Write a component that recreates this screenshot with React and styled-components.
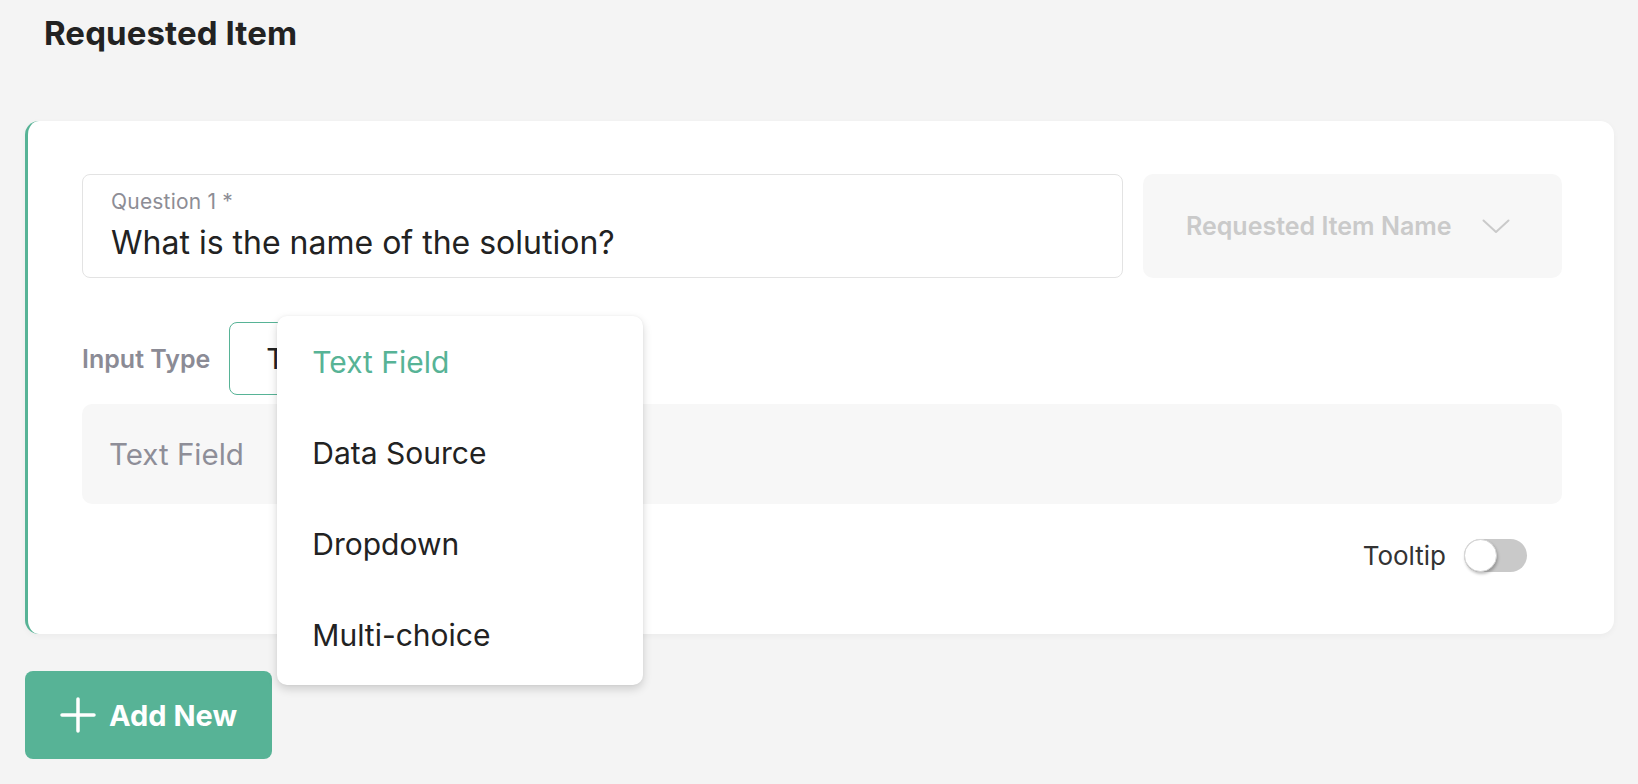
import React from "react";
import styled, { createGlobalStyle } from "styled-components";

const GlobalStyle = createGlobalStyle`
    body {
        margin: 0;
        background: #f4f4f4;
        font-family: Inter, "Noto Sans", sans-serif;
        color: #222;
    }
`;

const green = "#57b396";

const Page = styled.div`
    padding: 0 24px 0 25px;
    width: 1589px;
`;

const Title = styled.h1`
    margin: 0;
    padding: 13px 0 0 19px;
    height: 121px;
    box-sizing: border-box;
    font-size: 33px;
    font-weight: 700;
    color: #222;
    letter-spacing: 0.1px;
`;

const Card = styled.div`
    background: #fff;
    border-left: 3px solid ${green};
    border-radius: 14px;
    padding: 53px 52px 62px 54px;
    display: flex;
    flex-direction: column;
    box-shadow: 0 2px 6px rgba(0, 0, 0, 0.04);
`;

const TopRow = styled.div`
    display: flex;
    gap: 20px;
`;

const QuestionBox = styled.div`
    flex: 1;
    height: 104px;
    box-sizing: border-box;
    border: 1.5px solid #e3e3e3;
    border-radius: 8px;
    padding: 14px 28px 0;
    display: flex;
    flex-direction: column;
`;

const QuestionLabel = styled.span`
    font-size: 21px;
    color: #8d8d95;
    line-height: 26px;
    letter-spacing: 0.2px;
`;

const QuestionValue = styled.span`
    font-size: 32px;
    color: #222;
    line-height: 40px;
    margin-top: 8px;
`;

const NameSelect = styled.div`
    width: 419px;
    height: 104px;
    box-sizing: border-box;
    background: #f7f7f7;
    border-radius: 10px;
    display: flex;
    align-items: center;
    padding: 0 52px 0 43px;
    justify-content: space-between;
    font-size: 25px;
    font-weight: 600;
    color: #cacaca;
`;

const TypeRow = styled.div`
    display: flex;
    align-items: center;
    gap: 19px;
    margin-top: 44px;
`;

const TypeLabel = styled.span`
    font-size: 25px;
    font-weight: 600;
    color: #8b8b95;
`;

const SelectWrap = styled.div`
    position: relative;
`;

const SelectBox = styled.div`
    width: 250px;
    height: 73px;
    box-sizing: border-box;
    border: 1.5px solid ${green};
    border-radius: 8px;
    display: flex;
    align-items: center;
    padding-left: 36px;
    font-size: 29px;
    color: #222;
`;

const Menu = styled.ul`
    position: absolute;
    left: 48px;
    top: -6px;
    width: 366px;
    margin: 0;
    padding: 0 0 5px;
    list-style: none;
    background: #fff;
    border-radius: 10px;
    box-shadow: 0 4px 10px rgba(0, 0, 0, 0.16), 0 0 3px rgba(0, 0, 0, 0.05);
    z-index: 2;
`;

const MenuItem = styled.li`
    height: 91px;
    display: flex;
    align-items: center;
    padding-left: 35px;
    font-size: 30px;
    color: ${(p) => (p.$active ? green : "#222")};
`;

const TextFieldBox = styled.div`
    margin-top: 9px;
    height: 100px;
    background: #f7f7f7;
    border-radius: 10px;
    display: flex;
    align-items: center;
    padding-left: 27px;
    font-size: 29.5px;
    color: #8e8e98;
`;

const TooltipRow = styled.div`
    display: flex;
    justify-content: flex-end;
    align-items: center;
    gap: 18px;
    margin-top: 35px;
    padding-right: 35px;
    font-size: 26px;
    color: #333;
`;

const Switch = styled.div`
    position: relative;
    width: 63px;
    height: 33px;
    border-radius: 17px;
    background: #c9c9c9;
`;

const Thumb = styled.span`
    position: absolute;
    left: 0;
    top: 0;
    width: 33px;
    height: 33px;
    border-radius: 50%;
    box-sizing: border-box;
    background: #fff;
    border: 1px solid #d6d6d6;
    box-shadow: 1px 2px 3px rgba(0, 0, 0, 0.25);
`;

const AddButton = styled.button`
    margin-top: 37px;
    width: 247px;
    height: 88px;
    border: none;
    border-radius: 8px;
    background: ${green};
    color: #fff;
    display: flex;
    align-items: center;
    gap: 13px;
    padding: 0 0 0 35px;
    font-family: Inter, "Noto Sans", sans-serif;
    font-size: 29px;
    font-weight: 700;
`;

const options = ["Text Field", "Data Source", "Dropdown", "Multi-choice"];

export default function App() {
    return (
        <Page>
            <GlobalStyle />
            <Title>Requested Item</Title>
            <Card>
                <TopRow>
                    <QuestionBox>
                        <QuestionLabel>Question 1 *</QuestionLabel>
                        <QuestionValue>What is the name of the solution?</QuestionValue>
                    </QuestionBox>
                    <NameSelect>
                        Requested Item Name
                        <svg width="28" height="15" viewBox="0 0 28 15" fill="none">
                            <polyline points="1.5,1.5 14,13 26.5,1.5" stroke="#cacaca" strokeWidth="2" strokeLinecap="round" strokeLinejoin="round" />
                        </svg>
                    </NameSelect>
                </TopRow>
                <TypeRow>
                    <TypeLabel>Input Type</TypeLabel>
                    <SelectWrap>
                        <SelectBox>Text Field</SelectBox>
                        <Menu>
                            {options.map((o, i) => (
                                <MenuItem key={o} $active={i === 0}>{o}</MenuItem>
                            ))}
                        </Menu>
                    </SelectWrap>
                </TypeRow>
                <TextFieldBox>Text Field</TextFieldBox>
                <TooltipRow>
                    Tooltip
                    <Switch>
                        <Thumb />
                    </Switch>
                </TooltipRow>
            </Card>
            <AddButton>
                <svg width="36" height="36" viewBox="0 0 36 36" fill="none">
                    <path d="M18 2v32M2 18h32" stroke="#fff" strokeWidth="3.5" strokeLinecap="round" />
                </svg>
                Add New
            </AddButton>
        </Page>
    );
}
